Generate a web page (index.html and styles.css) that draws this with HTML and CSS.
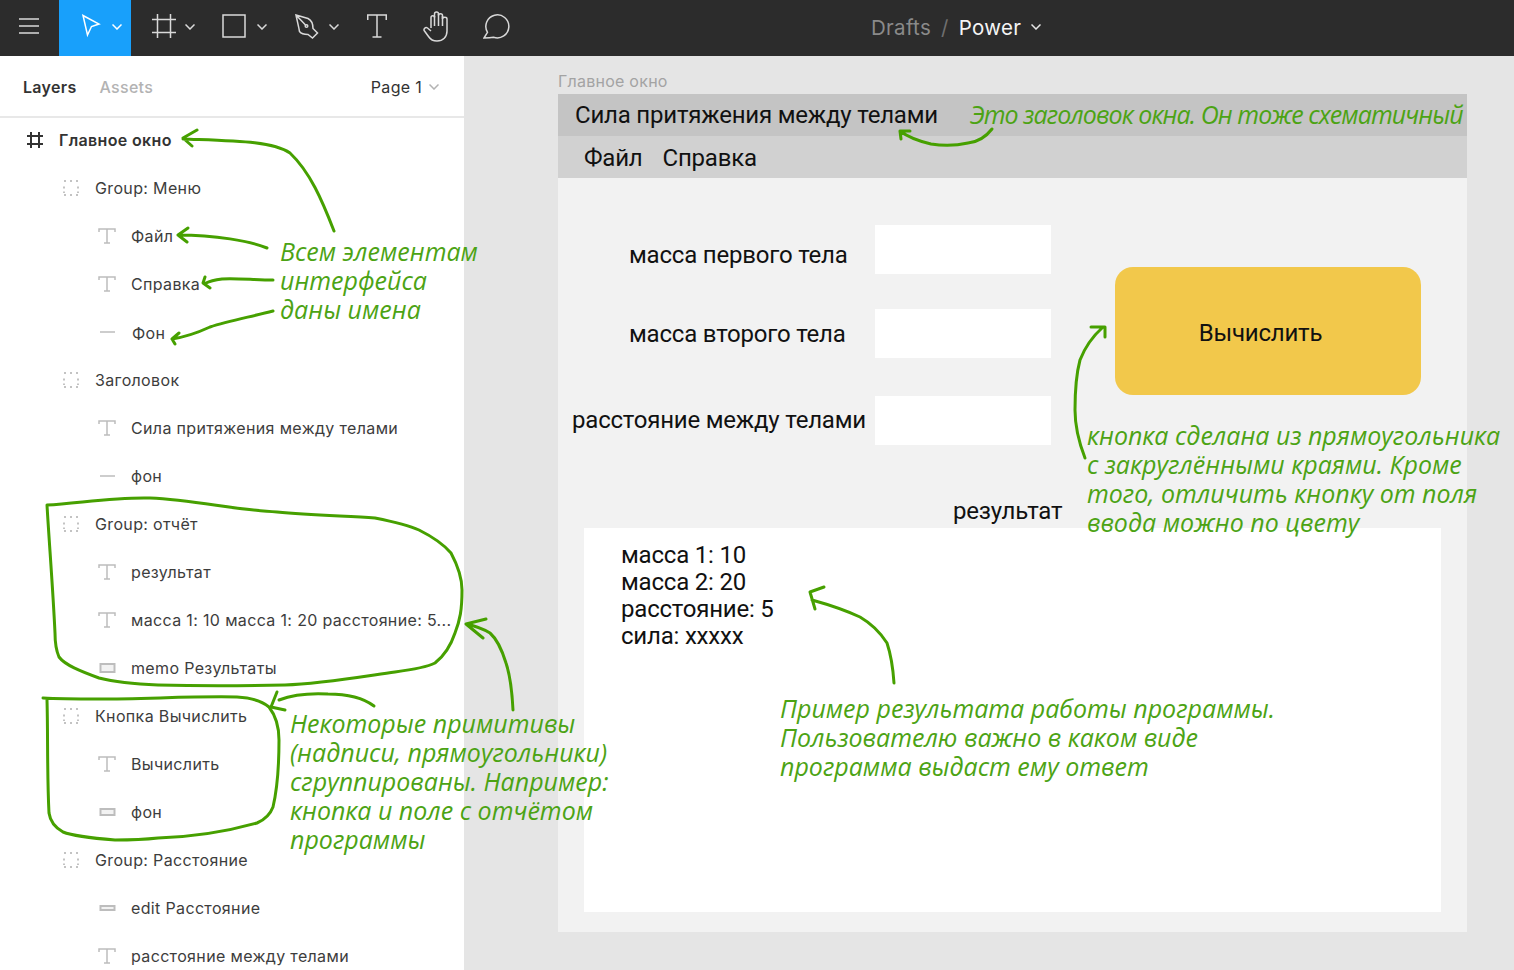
FILE: index.html
```html
<!DOCTYPE html>
<html>
<head>
    <meta charset="utf-8">
    <title>Power</title>
    <link rel="stylesheet" href="styles.css">
</head>
<body>
    <div class="toolbar">
        <div class="tool tool-menu">
            <svg width="20" height="16" viewBox="0 0 20 16"><path d="M0 1h20M0 8h20M0 15h20"/></svg>
        </div>
        <div class="tool tool-move">
            <svg width="20" height="24" viewBox="0 0 20 24"><path d="M2 1.500l16 8.500-7.500 2.500-4 8.500z"/></svg>
            <svg class="chev" width="10" height="6" viewBox="0 0 10 6"><path d="M.5.5L5 5 9.500.5"/></svg>
        </div>
        <div class="tool tool-frame">
            <svg width="24" height="24" viewBox="0 0 24 24"><path d="M5.500 0v24M18.500 0v24M0 5.500h24M0 18.500h24"/></svg>
            <svg class="chev" width="10" height="6" viewBox="0 0 10 6"><path d="M.5.5L5 5 9.500.5"/></svg>
        </div>
        <div class="tool tool-rect">
            <svg width="24" height="24" viewBox="0 0 24 24"><path d="M1 1h22v22H1z"/></svg>
            <svg class="chev" width="10" height="6" viewBox="0 0 10 6"><path d="M.5.5L5 5 9.500.5"/></svg>
        </div>
        <div class="tool tool-pen">
            <svg width="24" height="25" viewBox="0 0 24 25"><path d="M1 1L13 4.500C16 6 18 10 18 14.500L22.500 19 17.500 24 13 20.500C9 20.500 6 19.500 4.500 17.500 3.500 12 2 6 1 1zM1 1L11 11.500"/><circle cx="11.500" cy="12" r="1.300"/></svg>
            <svg class="chev" width="10" height="6" viewBox="0 0 10 6"><path d="M.5.5L5 5 9.500.5"/></svg>
        </div>
        <div class="tool tool-text">
            <svg width="20" height="24" viewBox="0 0 20 24"><path d="M.75 6V1h18.500v5M10 1v22M5.500 23h9"/></svg>
        </div>
        <div class="tool tool-hand">
            <svg width="27" height="31" viewBox="0 0 27 31"><path d="M8 17V6.500c0-2.500 3.500-2.500 3.500 0V3c0-2.700 4-2.700 4 0v1.500c0-2.500 4-2.500 4 0V8c0-2.300 4.500-2.300 4.500 0V20c0 6-4 10-10 10-4 0-6.500-1.500-8.500-4.500L1.500 20c-1.500-2 1-4.500 3-3l3.500 3"/><path d="M11.500 5v10M15.500 3v12M19.500 5v10"/></svg>
        </div>
        <div class="tool tool-comment">
            <svg width="27" height="25" viewBox="0 0 27 25"><path d="M1 24L4.500 18.300A11.500 11.500 0 1 1 10.500 23.200C8 23.800 4 24 1 24z"/></svg>
        </div>
        <div class="doc-title">
            <span class="doc-folder">Drafts</span>
            <span class="doc-slash">/</span>
            <span class="doc-name">Power</span>
            <svg class="chev" width="10" height="6" viewBox="0 0 10 6"><path d="M.5.5L5 5 9.500.5"/></svg>
        </div>
    </div>

    <div class="workspace">
        <div class="sidebar">
            <div class="panel-tabs">
                <span class="tab tab-active">Layers</span>
                <span class="tab">Assets</span>
                <span class="page-select">Page 1
                    <svg width="10" height="6" viewBox="0 0 10 6"><path d="M.5.5L5 5 9.500.5"/></svg>
                </span>
            </div>
            <div class="layers">
                <div class="layer layer-root">
                    <svg class="ico-frame" width="18" height="18" viewBox="0 0 18 18"><path d="M5 1v16M13 1v16M1 5h16M1 13h16"/></svg>
                    <span>Главное окно</span>
                </div>
                <div class="layer lvl1"><svg class="ico ico-group" width="16" height="16" viewBox="0 0 16 16"><path d="M1 1h2M7 1h2M13 1h2M1 15h2M7 15h2M13 15h2M1 6.500v2M15 6.500v2M1 11.500v1.500M15 11.500v1.500"/></svg><span>Group: Меню</span></div>
                <div class="layer lvl2"><svg class="ico ico-t" width="18" height="16" viewBox="0 0 18 16"><path d="M1 4V1h16v3M9 1v14M6 15h6"/></svg><span>Файл</span></div>
                <div class="layer lvl2"><svg class="ico ico-t" width="18" height="16" viewBox="0 0 18 16"><path d="M1 4V1h16v3M9 1v14M6 15h6"/></svg><span>Справка</span></div>
                <div class="layer lvl2"><svg class="ico ico-t" width="18" height="16" viewBox="0 0 18 16"><path d="M2 8h15"/></svg><span class="nudge">Фон</span></div>
                <div class="layer lvl1"><svg class="ico ico-group" width="16" height="16" viewBox="0 0 16 16"><path d="M1 1h2M7 1h2M13 1h2M1 15h2M7 15h2M13 15h2M1 6.500v2M15 6.500v2M1 11.500v1.500M15 11.500v1.500"/></svg><span>Заголовок</span></div>
                <div class="layer lvl2"><svg class="ico ico-t" width="18" height="16" viewBox="0 0 18 16"><path d="M1 4V1h16v3M9 1v14M6 15h6"/></svg><span>Сила притяжения между телами</span></div>
                <div class="layer lvl2"><svg class="ico ico-t" width="18" height="16" viewBox="0 0 18 16"><path d="M2 8h15"/></svg><span>фон</span></div>
                <div class="layer lvl1"><svg class="ico ico-group" width="16" height="16" viewBox="0 0 16 16"><path d="M1 1h2M7 1h2M13 1h2M1 15h2M7 15h2M13 15h2M1 6.500v2M15 6.500v2M1 11.500v1.500M15 11.500v1.500"/></svg><span>Group: отчёт</span></div>
                <div class="layer lvl2"><svg class="ico ico-t" width="18" height="16" viewBox="0 0 18 16"><path d="M1 4V1h16v3M9 1v14M6 15h6"/></svg><span>результат</span></div>
                <div class="layer lvl2"><svg class="ico ico-t" width="18" height="16" viewBox="0 0 18 16"><path d="M1 4V1h16v3M9 1v14M6 15h6"/></svg><span>масса 1: 10 масса 1: 20 расстояние: 5...</span></div>
                <div class="layer lvl2"><svg class="ico ico-rect" width="18" height="16" viewBox="0 0 18 16"><path d="M2.500 4h14v8h-14z"/></svg><span>memo Результаты</span></div>
                <div class="layer lvl1"><svg class="ico ico-group" width="16" height="16" viewBox="0 0 16 16"><path d="M1 1h2M7 1h2M13 1h2M1 15h2M7 15h2M13 15h2M1 6.500v2M15 6.500v2M1 11.500v1.500M15 11.500v1.500"/></svg><span>Кнопка Вычислить</span></div>
                <div class="layer lvl2"><svg class="ico ico-t" width="18" height="16" viewBox="0 0 18 16"><path d="M1 4V1h16v3M9 1v14M6 15h6"/></svg><span>Вычислить</span></div>
                <div class="layer lvl2"><svg class="ico ico-rect" width="18" height="16" viewBox="0 0 18 16"><path d="M2.500 5h14v6h-14z"/></svg><span>фон</span></div>
                <div class="layer lvl1"><svg class="ico ico-group" width="16" height="16" viewBox="0 0 16 16"><path d="M1 1h2M7 1h2M13 1h2M1 15h2M7 15h2M13 15h2M1 6.500v2M15 6.500v2M1 11.500v1.500M15 11.500v1.500"/></svg><span>Group: Расстояние</span></div>
                <div class="layer lvl2"><svg class="ico ico-rect" width="18" height="16" viewBox="0 0 18 16"><path d="M2.500 6h14v4h-14z"/></svg><span>edit Расстояние</span></div>
                <div class="layer lvl2"><svg class="ico ico-t" width="18" height="16" viewBox="0 0 18 16"><path d="M1 4V1h16v3M9 1v14M6 15h6"/></svg><span>расстояние между телами</span></div>
            </div>
        </div>

        <div class="canvas">
            <div class="frame-label">Главное окно</div>
            <div class="frame">
                <div class="win-title">Сила притяжения между телами</div>
                <div class="win-menu"><span>Файл</span><span>Справка</span></div>
                <div class="win-body">
                    <div class="win-top">
                        <div class="form">
                            <div class="form-row row-1"><label class="indent">масса первого тела</label><div class="field"></div></div>
                            <div class="form-row row-2"><label class="indent">масса второго тела</label><div class="field"></div></div>
                            <div class="form-row row-3"><label>расстояние между телами</label><div class="field"></div></div>
                        </div>
                        <div class="calc-btn">Вычислить</div>
                    </div>
                    <div class="result-label">результат</div>
                    <div class="memo">масса 1: 10<br>масса 2: 20<br>расстояние: 5<br>сила: xxxxx</div>
                </div>
            </div>
        </div>
    </div>

    <!-- пометки поверх скриншота -->
    <svg class="marks" width="1514" height="970" viewBox="0 0 1514 970">
        <path d="M334 231C322 200 310 172 290 153C272 141 235 141 183 139M197 130L183 138L192 146"/>
        <path d="M267 248C250 241 215 235 178 235M188 228L178 235L187 242"/>
        <path d="M273 280C255 280 235 278 222 279C215 280 210 281 206 283M205 277L203 283L210 288"/>
        <path d="M273 311C250 317 228 321 210 327C197 333 185 337 172 339M179 333L172 339L175 344"/>
        <path d="M47 505C80 503 115 497 150 498C195 500 235 510 277 512C310 515 345 516 375 518C395 522 408 525 419 530C435 538 445 546 451 553C459 568 462 578 462 590C462 610 460 620 455 633C450 648 444 656 435 663C425 668 410 670 395 672C360 677 320 684 285 685C240 686 195 686 158 685C135 684 115 682 99 678C80 671 65 665 59 657C56 650 55 640 55 633C53 590 49 540 47 505Z"/>
        <path d="M43 698C60 699 80 699 99 699C145 699 195 696 237 697C255 698 263 702 269 707C276 716 279 728 279 740C279 765 277 790 273 807C270 815 264 820 257 823C225 832 190 837 158 838C140 840 128 840 115 840C90 838 73 836 63 832C54 827 50 820 49 813C47 775 48 735 47 700"/>
        <path d="M374 706C362 697 345 694 328 694C310 693 292 695 279 700M277 692L271 707L285 710"/>
        <path d="M513 710C512 690 510 675 506 663C502 650 498 640 490 633C482 628 475 626 466 624M486 619L466 624L483 638"/>
        <path d="M992 129C985 138 978 142 968 143C955 146 943 146 931 144C918 141 908 137 900 131M901 139L900 131L910 131"/>
        <path d="M1085 458C1078 440 1075 425 1075 410C1075 390 1076 375 1080 360C1085 347 1093 336 1103 327M1091 327L1105 327L1105 337"/>
        <path d="M894 683C893 668 891 655 887 643C880 632 872 624 860 617C845 610 830 605 812 600M824 587L810 592L815 609"/>
    </svg>
    <div class="note note-names">Всем элементам<br>интерфейса<br>даны имена</div>
    <div class="note note-title">Это заголовок окна. Он тоже схематичный</div>
    <div class="note note-button">кнопка сделана из прямоугольника<br>с закруглёнными краями. Кроме<br>того, отличить кнопку от поля<br>ввода можно по цвету</div>
    <div class="note note-groups">Некоторые примитивы<br>(надписи, прямоугольники)<br>сгруппированы. Например:<br>кнопка и поле с отчётом<br>программы</div>
    <div class="note note-result">Пример результата работы программы.<br>Пользователю важно в каком виде<br>программа выдаст ему ответ</div>
</body>
</html>
```
FILE: styles.css
```css
* {
    box-sizing: border-box;
}

html, body {
    height: 100%;
}

body {
    margin: 0;
    overflow: hidden;
    position: relative;
    font-family: Inter, "Noto Sans", sans-serif;
    background: #e5e5e5;
}

svg {
    display: block;
    flex: none;
}

/* верхняя панель */
.toolbar {
    display: flex;
    align-items: center;
    height: 56px;
    background: #2c2c2c;
    color: #fff;
}

.tool {
    display: flex;
    align-items: center;
    height: 56px;
    padding-bottom: 4px;
}

.tool svg path, .tool svg circle {
    fill: none;
    stroke: #d9d9d9;
    stroke-width: 1.5;
}

.tool .chev {
    margin-left: 9px;
    margin-top: 2px;
}

.tool-menu {
    width: 59px;
    padding-left: 19px;
}

.tool-move {
    width: 72px;
    padding-left: 22px;
    background: #18a0fb;
}

.tool-move svg path {
    stroke: #fff;
}

.tool-move .chev {
    margin-left: 11px;
}

.tool-frame {
    margin-left: 21px;
}

.tool-rect {
    margin-left: 27px;
}

.tool-rect .chev {
    margin-left: 11px;
}

.tool-pen {
    margin-left: 28px;
}

.tool-pen .chev {
    margin-left: 10px;
}

.tool-text {
    margin-left: 28px;
}

.tool-hand {
    margin-left: 36px;
}

.tool-comment {
    margin-left: 33px;
}

.doc-title {
    display: flex;
    align-items: center;
    margin: 0 0 2px 361px;
    font-size: 20.500px;
    letter-spacing: .3px;
}

.doc-folder {
    color: #8a8a8a;
}

.doc-slash {
    margin: 0 10px;
    color: #6f6f6f;
}

.doc-name {
    color: #f5f5f5;
}

.doc-title .chev {
    margin-left: 10px;
}

.chev path {
    fill: none;
    stroke: #e6e6e6;
    stroke-width: 1.5;
}

.workspace {
    display: flex;
    height: 914px;
}

/* панель слоёв */
.sidebar {
    width: 464px;
    flex: none;
    overflow: hidden;
    background: #fff;
}

.panel-tabs {
    display: flex;
    align-items: center;
    height: 62px;
    padding: 2px 25px 0 23px;
    border-bottom: 2px solid #e8e8e8;
    font-size: 16px;
    letter-spacing: .3px;
}

.tab {
    margin-right: 23px;
    color: #b3b3b3;
    font-weight: 500;
}

.tab-active {
    color: #333;
    font-weight: 600;
}

.page-select {
    display: flex;
    align-items: center;
    gap: 7px;
    margin-left: auto;
    color: #333;
}

.page-select path {
    fill: none;
    stroke: #b3b3b3;
    stroke-width: 1.5;
}

.layers {
    margin-top: -2px;
}

.layer {
    display: flex;
    align-items: center;
    height: 48px;
    font-size: 16px;
    letter-spacing: .35px;
    color: #3d3d3d;
    white-space: nowrap;
}

.layer-root {
    padding-left: 26px;
    gap: 15px;
    font-weight: 600;
    color: #333;
}

.lvl1 {
    padding-left: 63px;
}

.lvl1 .ico {
    margin-right: 16px;
}

.lvl2 {
    padding-left: 98px;
}

.lvl2 .ico {
    margin-right: 15px;
}

.nudge {
    margin: 2px 0 0 1px;
}

.ico-frame path {
    fill: none;
    stroke: #333;
    stroke-width: 2;
}

.ico path {
    fill: none;
    stroke: #bdbdbd;
    stroke-width: 1.5;
}

.ico-group path {
    stroke: #b0b0b0;
}

.ico-rect path {
    fill: #f2f2f2;
    stroke-width: 2;
}

/* холст */
.canvas {
    flex: 1;
    padding: 16px 47px 0 94px;
    background: #e5e5e5;
}

.frame-label {
    height: 22px;
    font-size: 16px;
    letter-spacing: .25px;
    line-height: 18px;
    color: #a3a3a3;
}

.frame {
    height: 838px;
    background: #f2f2f2;
    font-family: Roboto, sans-serif;
    font-size: 24px;
    letter-spacing: -.2px;
    color: #111;
}

.win-title {
    height: 42px;
    padding-left: 17px;
    line-height: 42px;
    background: #c4c4c4;
}

.win-menu {
    display: flex;
    gap: 20px;
    height: 42px;
    padding-left: 26px;
    line-height: 44px;
    background: #d1d1d1;
}

.win-body {
    padding: 47px 0 0 14px;
}

.win-top {
    display: flex;
}

.form {
    width: 479px;
}

.form-row {
    display: flex;
    align-items: center;
    justify-content: space-between;
    height: 49px;
}

.row-1 label {
    margin-top: 10px;
}

.row-2 {
    margin-top: 35px;
}

.row-3 {
    margin-top: 38px;
}

.row-3 label {
    margin-bottom: 2px;
}

.indent {
    padding-left: 57px;
}

.field {
    width: 176px;
    height: 49px;
    background: #fff;
}

.calc-btn {
    display: flex;
    align-items: center;
    justify-content: center;
    width: 306px;
    height: 128px;
    margin: 42px 0 0 64px;
    padding: 3px 15px 0 0;
    border-radius: 18px;
    background: #f2c84b;
}

.result-label {
    height: 28px;
    margin: 52px 0 0 381px;
    line-height: 28px;
}

.memo {
    width: 857px;
    height: 384px;
    margin: 3px 0 0 12px;
    padding: 14px 0 0 37px;
    line-height: 27px;
    background: #fff;
}

/* зелёные пометки */
.marks {
    position: absolute;
    top: 0;
    left: 0;
    pointer-events: none;
}

.marks path {
    fill: none;
    stroke: #46a000;
    stroke-width: 3;
    stroke-linecap: round;
    stroke-linejoin: round;
}

.note {
    position: absolute;
    font-family: "Open Sans", sans-serif;
    font-style: italic;
    font-size: 25px;
    line-height: 29px;
    color: #4ca314;
    white-space: nowrap;
}

.note-names {
    left: 280px;
    top: 237px;
}

.note-title {
    left: 970px;
    top: 100px;
    letter-spacing: -.92px;
}

.note-button {
    left: 1087px;
    top: 421px;
}

.note-groups {
    left: 290px;
    top: 709px;
}

.note-result {
    left: 780px;
    top: 694px;
}
```
